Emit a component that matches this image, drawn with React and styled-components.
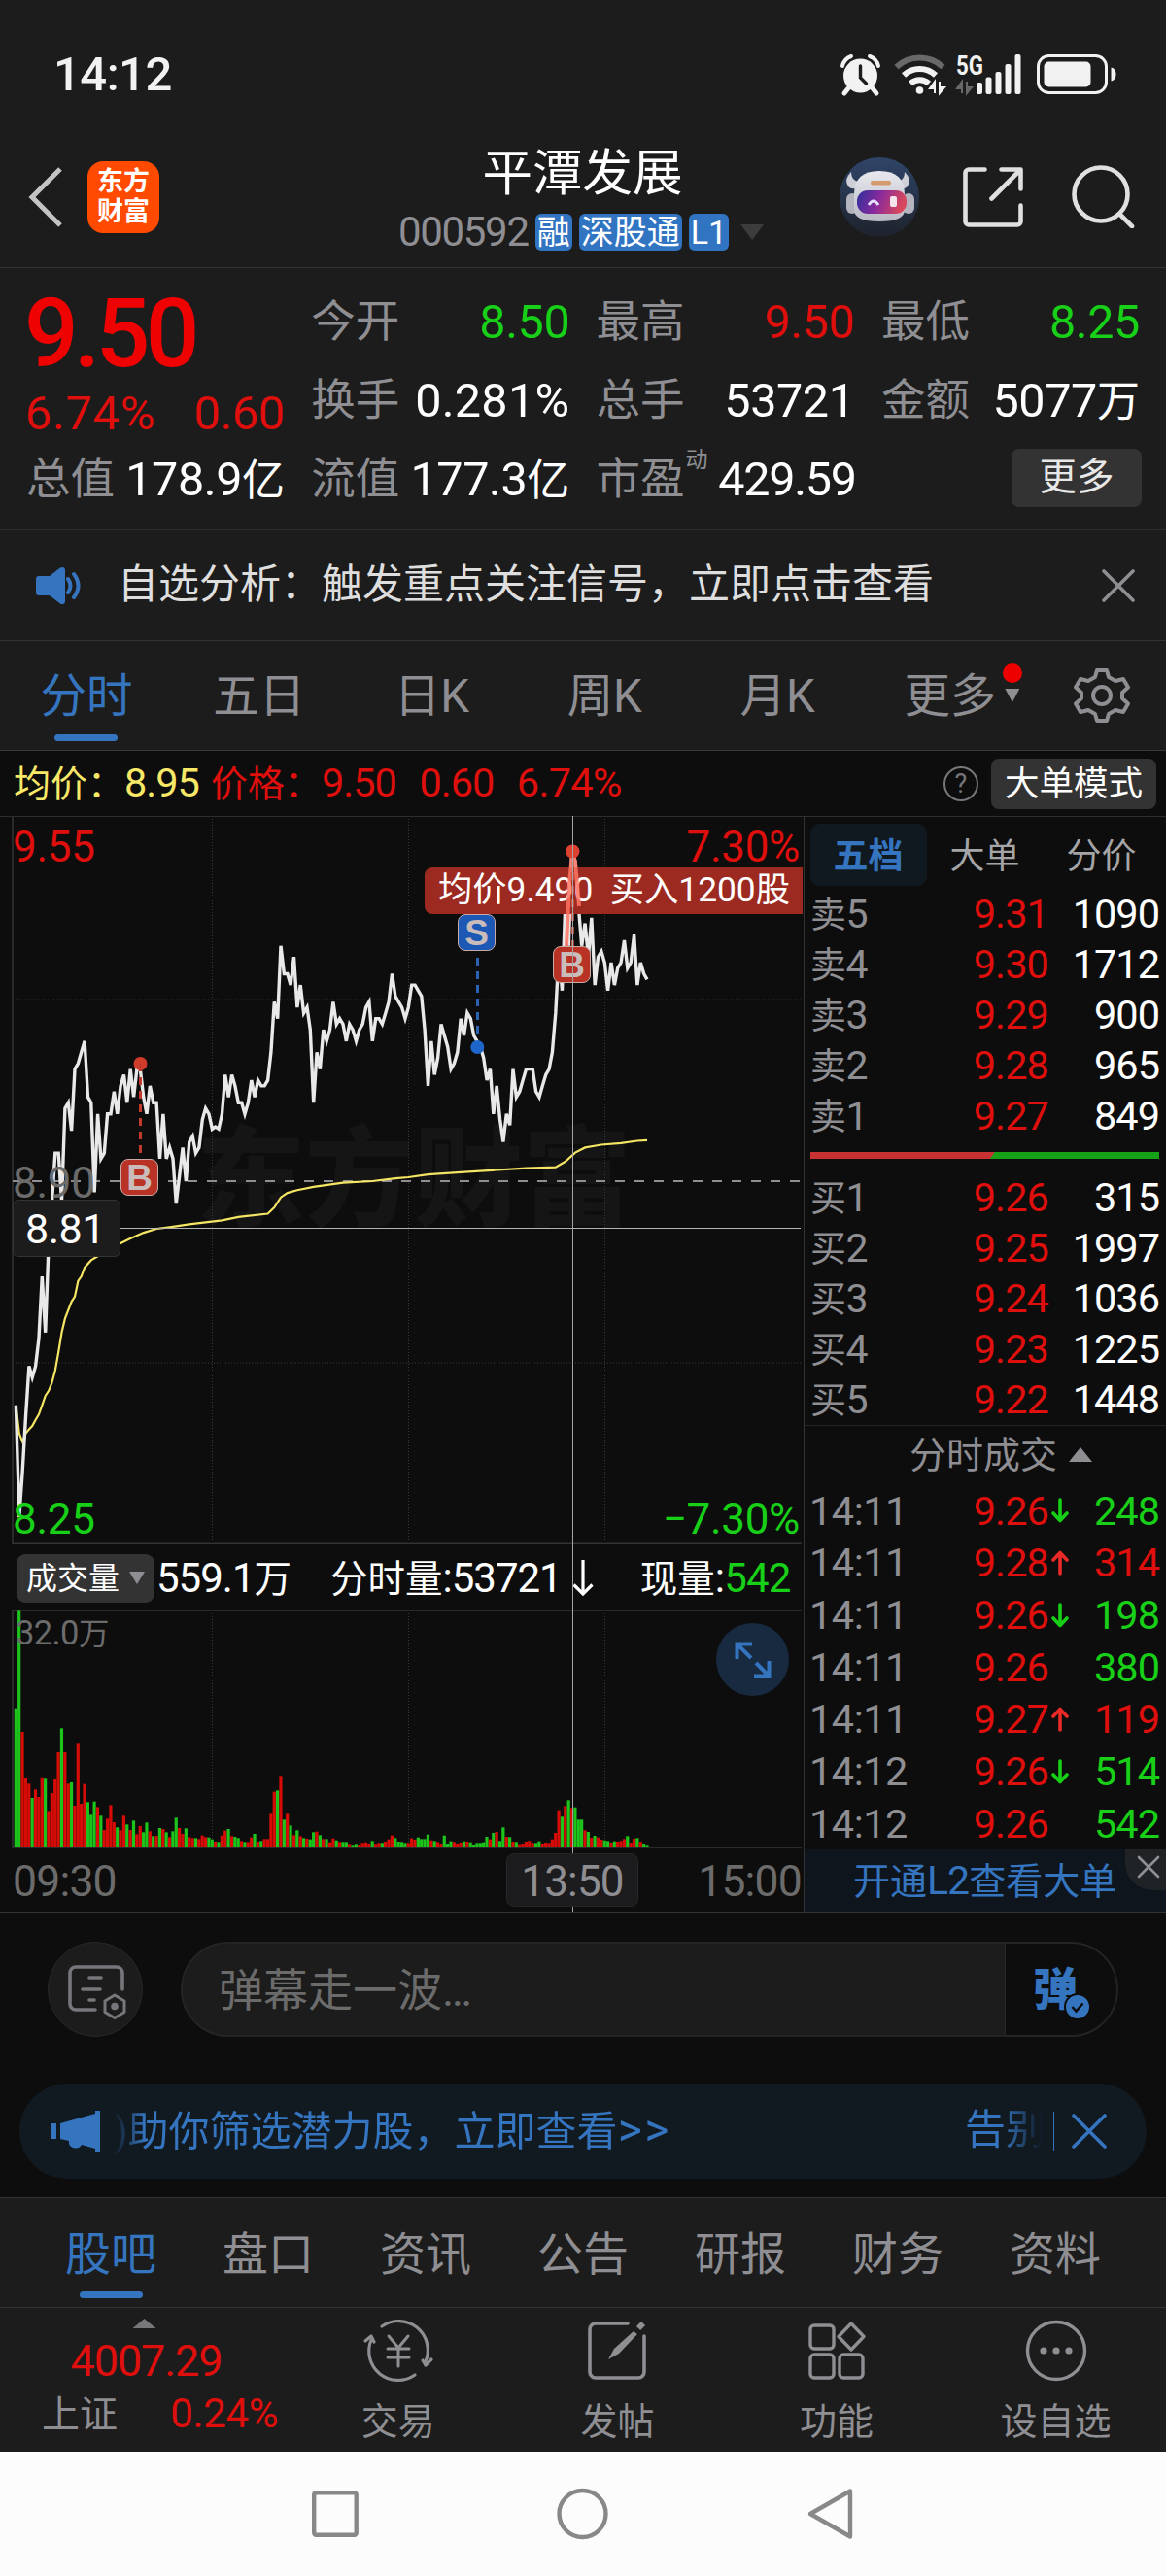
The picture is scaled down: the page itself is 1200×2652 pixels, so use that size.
import styled, { createGlobalStyle, css } from "styled-components";

const RED = "#de0f0c";
const GREEN = "#18d018";
const BLUE = "#3575c0";
const GREY = "#8e8e93";
const DIM = "#6b6b6b";

// cents relative to the previous close (8.90), one value per minute
const PRICES = [
    -40, -60, -52, -42, -33, -35, -33, -28, -17, -27, -11, -4, 5, 5, -3.5, 13, 14, 9, 20, 21,
    23, 25, 15, 14, -2, 12, 4, 5, 12, 12, 16, 12, 17, 19, 14, 20, 15, 20, 20, 15,
    12, 17, 14, 14, 4, 12, 4, 6, 4, -4, 1, 6, 0, 7, 8, 5, 6, 11, 13, 12,
    9.3, 9.7, 9.3, 12, 19, 15, 19, 17, 14, 14, 12, 14, 18, 15, 18, 17, 17, 18, 23, 32,
    29, 42, 37, 37, 35, 40, 31, 35, 30, 31, 27, 14, 23, 20, 27, 25, 27, 32, 28, 29,
    28, 25, 28, 27, 25, 27, 28, 31, 32, 25, 29, 29, 28, 30, 32, 37, 33, 32, 31, 29,
    31, 35, 35, 34, 33, 27, 17, 25, 19, 22, 28, 26, 24, 20, 21, 23, 29, 26, 30, 29,
    26, 25, 24, 22, 18, 20, 12, 17, 11, 7, 12, 10, 20, 15, 16, 18, 20, 20, 20, 16,
    15, 17, 19, 20, 23, 30, 41, 34, 50, 42, 59, 57, 49, 42, 46, 40, 47, 35, 40, 41,
    39, 34, 39, 35, 38, 39, 43, 38, 39, 44, 35, 39, 37, 36,
];

// [minute, cents]
const AVERAGE = [
    [0, -40], [1, -45], [2, -46.5], [3, -45], [4, -44.3], [5, -43.7], [6, -42.6], [7, -41.6], [8, -40],
    [9, -38.3], [10, -37.4], [11, -36], [12, -33.8], [13, -30.5], [14, -27], [15, -24.5], [17, -21.5],
    [18, -20.6], [19, -17.8], [20, -17], [21, -15.4], [23, -14.1], [25, -13.4], [27, -12.8], [32, -11.1],
    [35, -10.2], [39, -9.2], [43, -8.5], [47, -8.2], [53, -7.7], [63, -7], [68, -6.4], [77, -5.8],
    [79, -4.7], [81, -2.9], [83, -2.1], [86, -1.6], [91, -1], [100, -0.3], [109, 0], [116, 0.5],
    [120, 0.7], [126, 1.2], [136, 1.6], [147, 2], [156, 2.3], [165, 2.5], [168, 3.5], [171, 5.1],
    [174, 6], [179, 6.5], [185, 6.8], [190, 7.2], [193, 7.3],
];

// positive = rising minute, negative = falling minute
const VOLUMES = [
    -430, -731, 357, 216, 197, -153, 179, 156, 217, -215, 113, 168, 210, 294, -368, 294, 197, -201, 129, 323,
    135, 196, -140, -101, -142, 125, -98, 54, 89, 131, 78, -62, 53, 98, -71, 54, -83, 41, 66, -47,
    -77, 50, -35, 36, -60, 57, -47, 32, -50, -92, 60, 42, -59, 32, 29, -29, 26, 37, 32, -31,
    -25, 18, -17, 37, 52, -57, 35, -33, -29, 20, -17, 17, 31, -42, 18, -20, 26, 26, 104, 172,
    -176, 221, -86, 104, -68, 38, -53, 35, -29, 27, -25, -47, 49, -38, 26, -26, 16, 28, -22, 17,
    -17, -17, 11, -8, -11, 9, 14, 16, 12, -20, 11, 14, -14, 18, 25, 37, -29, -18, -17, -14,
    14, 28, 24, -31, -26, -26, -40, 22, -20, 17, 12, -37, -12, -19, 17, 12, 15, -19, 18, -16,
    -9, -14, -14, -16, -33, 25, -45, 48, -20, -62, 33, -32, 18, -17, 10, 12, 18, 20, 14, -14,
    -19, 12, 15, 14, 25, 45, 115, -95, 128, -146, 122, -124, -86, -86, 53, -48, 30, -36, 31, 24,
    -22, -20, 15, -19, 18, 20, 26, -35, 15, 27, -29, 18, -12, -8,
];

const xOf = (minute) => 16.4 + minute * 3.366;
const yOf = (cents) => 376 - cents * 5.77;
const toPoints = (list) => list.map(([m, c]) => `${xOf(m).toFixed(1)},${yOf(c).toFixed(1)}`).join(" ");

const SELLS = [
    ["卖5", "9.31", "1090"],
    ["卖4", "9.30", "1712"],
    ["卖3", "9.29", "900"],
    ["卖2", "9.28", "965"],
    ["卖1", "9.27", "849"],
];

const BUYS = [
    ["买1", "9.26", "315"],
    ["买2", "9.25", "1997"],
    ["买3", "9.24", "1036"],
    ["买4", "9.23", "1225"],
    ["买5", "9.22", "1448"],
];

const TRADES = [
    ["14:11", "9.26", "down", "248", GREEN],
    ["14:11", "9.28", "up", "314", RED],
    ["14:11", "9.26", "down", "198", GREEN],
    ["14:11", "9.26", "", "380", GREEN],
    ["14:11", "9.27", "up", "119", RED],
    ["14:12", "9.26", "down", "514", GREEN],
    ["14:12", "9.26", "", "542", GREEN],
];

const SECTIONS = ["股吧", "盘口", "资讯", "公告", "研报", "财务", "资料"];

function StatusIcons() {
    return (
        <svg width="290" height="70" viewBox="862 42 290 70" fill="#f2f2f2">
            <circle cx="885.5" cy="78" r="17.5" />
            <path d="M867 68a14 14 0 0 1 9-10M904 68a14 14 0 0 0-9-10" stroke="#f2f2f2" strokeWidth="4" fill="none" strokeLinecap="round" />
            <path d="M873 91l-4 5M898 91l4 5" stroke="#f2f2f2" strokeWidth="5" strokeLinecap="round" />
            <path d="M885.5 68v12l6 6" stroke="#1c1c1c" strokeWidth="3.4" fill="none" strokeLinecap="round" />
            <g fill="none" strokeLinecap="butt">
                <path d="M922.5 69a35 35 0 0 1 48 0" stroke="#686868" strokeWidth="6" />
                <path d="M930 77.5a24 24 0 0 1 33 0" stroke="#f2f2f2" strokeWidth="6" />
                <path d="M937 86a14 14 0 0 1 19 0" stroke="#f2f2f2" strokeWidth="6" />
            </g>
            <circle cx="946.5" cy="93" r="3.8" />
            <path d="M962 96V84l-5 7h5M967 84v12l5-6h-5" stroke="#f2f2f2" strokeWidth="2" />
            <path d="M990 96V84l-5 7h5M995 84v12l5-6h-5" stroke="#686868" strokeWidth="2" fill="#686868" />
            <text x="984" y="76.5" fontSize="27" fontWeight="700" fontFamily="Roboto, sans-serif" textLength="28" lengthAdjust="spacingAndGlyphs">5G</text>
            <rect x="1005" y="85" width="6" height="12" rx="2" />
            <rect x="1014.5" y="79.5" width="6" height="17.5" rx="2" />
            <rect x="1024.5" y="74" width="6" height="23" rx="2" />
            <rect x="1034.5" y="66" width="6" height="31" rx="2" />
            <rect x="1044.5" y="56" width="6" height="41" rx="2" />
            <rect x="1068.5" y="57.5" width="70" height="38" rx="11" fill="none" stroke="#f2f2f2" strokeWidth="3" />
            <rect x="1074.5" y="63.5" width="48" height="26" rx="5" />
            <path d="M1143.5 69.5q5 1 5 7t-5 7z" />
        </svg>
    );
}

function RobotIcon() {
    return (
        <svg width="82" height="82" viewBox="0 0 82 82">
            <defs>
                <linearGradient id="sky" x1="0" y1="0" x2="0" y2="1">
                    <stop offset="0" stopColor="#2f4569" />
                    <stop offset="1" stopColor="#1e222b" />
                </linearGradient>
                <linearGradient id="visor" x1="0" y1="0" x2="1" y2="0.2">
                    <stop offset="0" stopColor="#2d2f9c" />
                    <stop offset="0.5" stopColor="#8a2a9c" />
                    <stop offset="1" stopColor="#d8485c" />
                </linearGradient>
                <linearGradient id="shell" x1="0" y1="0" x2="0" y2="1">
                    <stop offset="0" stopColor="#e8e8ee" />
                    <stop offset="1" stopColor="#b9b9c4" />
                </linearGradient>
            </defs>
            <circle cx="41" cy="41" r="41" fill="url(#sky)" />
            <path d="M12 15q-8 8-3 15 4 4 9 1l2-6q-8-1-8-10zM67 15q8 8 3 15-4 4-9 1l-2-6q8-1 8-10z" fill="#cfcfd8" />
            <rect x="7" y="37" width="12" height="21" rx="6" fill="#b4b4bf" />
            <rect x="65" y="37" width="12" height="21" rx="6" fill="#b4b4bf" />
            <path d="M15 38q0-24 26-24t26 24v16q0 12-26 12T15 54z" fill="url(#shell)" />
            <rect x="32" y="24" width="21" height="4.5" rx="2" fill="#d49a6c" />
            <rect x="18" y="34" width="51" height="24" rx="11" fill="url(#visor)" />
            <path d="M30 49q5-8 10 0" fill="none" stroke="#e6e0ff" strokeWidth="3" />
            <rect x="52" y="40" width="7" height="11" rx="2" fill="#f3e4ee" />
        </svg>
    );
}

function Cross({ size, width = 3, color = GREY }) {
    return (
        <svg width={size} height={size} viewBox={`0 0 ${size} ${size}`}>
            <path d={`M2 2L${size - 2} ${size - 2}M${size - 2} 2L2 ${size - 2}`} stroke={color} strokeWidth={width} strokeLinecap="round" />
        </svg>
    );
}

function GearIcon() {
    return (
        <svg width="58" height="58" viewBox="0 0 58 58" fill="none" stroke={GREY} strokeWidth="4" strokeLinejoin="round">
            <path d="M24 3h10l2 7 7 4 8-2 5 8.5-6 5.5v6l6 5.5-5 8.5-8-2-7 4-2 7H24l-2-7-7-4-8 2-5-8.5L8 32v-6l-6-5.5L7 12l8 2 7-4z" />
            <circle cx="29" cy="29" r="9" />
        </svg>
    );
}

function TradeArrow({ dir }) {
    if (!dir) return null;
    return (
        <svg width="18" height="26" viewBox="0 0 18 26" fill="none" stroke={dir === "up" ? "#ea2a26" : "#16d016"} strokeWidth="3.6" strokeLinecap="round" strokeLinejoin="round">
            <path d={dir === "up" ? "M9 24V3M2 10l7-7.5 7 7.5" : "M9 2v21M2 16l7 7.5 7-7.5"} />
        </svg>
    );
}

function PriceChart() {
    return (
        <svg width="827" height="750" viewBox="0 0 827 750" fill="none">
            <g stroke="#3a3a3a" strokeDasharray="1 2" strokeWidth="1">
                <path d="M218.5 0V750M420.5 0V750M622.5 0V750" />
                <path d="M13 189H824M13 563H824" />
            </g>
            <path d="M13 0V750" stroke="#2a2a2a" strokeWidth="2" />
            <path d="M0 0.5H827" stroke="#2e2e2e" />
            <path d="M13 749.5H825" stroke="#333" strokeWidth="2" />
            <path d="M13 376H824" stroke="#8e8e93" strokeWidth="2" strokeDasharray="10 10" />
            <polyline points={toPoints(AVERAGE)} stroke="#f5e564" strokeWidth="2.2" />
            <polyline points={toPoints(PRICES.map((c, m) => [m, c]))} stroke="#e9e9e9" strokeWidth="3.4" />
            <g fill="#d03c2c">
                <circle cx="144.5" cy="255" r="7" />
                <circle cx="589.3" cy="36.5" r="7" />
            </g>
            <circle cx="491.3" cy="238" r="7" fill="#1f66cc" />
            <path d="M144.5 255V350" stroke="#c23a2b" strokeWidth="3" strokeDasharray="8 6" />
            <path d="M491.5 146V226" stroke="#2a62b4" strokeWidth="3" strokeDasharray="8 6" />
        </svg>
    );
}

function VolumeChart() {
    return (
        <svg width="827" height="245" viewBox="0 0 827 245">
            <path d="M218.5 0V245M420.5 0V245M622.5 0V245" stroke="#3a3a3a" strokeDasharray="1 2" />
            <path d="M13 0V245M13 244.5H825" stroke="#2a2a2a" strokeWidth="2" />
            <path d="M13 0.5H825" stroke="#2a2a2a" />
            {VOLUMES.map((v, m) => {
                const h = Math.abs(v) / 3;
                return <rect key={m} x={xOf(m) - 1.68} y={244 - h} width="3.2" height={h} fill={v > 0 ? "#d80c06" : "#1cc41c"} />;
            })}
        </svg>
    );
}

function Badge({ x, y, letter }) {
    return <Mark $x={x} $y={y} $sell={letter === "S"}>{letter}</Mark>;
}

function BookRows({ rows }) {
    return (
        <Book>
            {rows.map(([name, price, volume]) => (
                <BookRow key={name}>
                    <BookName>{name[0]}<Num $size={41}>{name[1]}</Num></BookName>
                    <BookPrice>{price}</BookPrice>
                    <BookVolume>{volume}</BookVolume>
                </BookRow>
            ))}
        </Book>
    );
}

export default function App() {
    return (
        <Phone>
            <GlobalStyle />
            <StatusBar>
                <Clock>14:12</Clock>
                <StatusIcons />
            </StatusBar>

            <Header>
                <HeaderSide>
                    <svg width="36" height="62" viewBox="0 0 36 62" fill="none" stroke="#c4c4c4" strokeWidth="5">
                        <path d="M33 2L4 31l29 29" />
                    </svg>
                    <Brand><span>东方</span><span>财富</span></Brand>
                </HeaderSide>
                <TitleBlock>
                    <Title>平潭发展</Title>
                    <CodeLine>
                        <Num $size={42} $ls={-1.3}>000592</Num>
                        <Chip>融</Chip>
                        <Chip>深股通</Chip>
                        <Chip>L1</Chip>
                        <Triangle $w={24} $h={16} $color="#3c3c3c" />
                    </CodeLine>
                </TitleBlock>
                <HeaderActions>
                    <RobotIcon />
                    <svg width="62" height="62" viewBox="0 0 62 62" fill="none" stroke="#e0e0e0" strokeWidth="4.6" strokeLinecap="round" strokeLinejoin="round">
                        <path d="M22.5 2.5H6a3.5 3.5 0 0 0-3.5 3.5v50A3.5 3.5 0 0 0 6 59.5h50a3.5 3.5 0 0 0 3.5-3.5V39.5" />
                        <path d="M39.5 2.5h20v20M59 3L29.5 32.5" />
                    </svg>
                    <svg width="66" height="66" viewBox="0 0 66 66" fill="none" stroke="#e0e0e0" strokeWidth="4.6" strokeLinecap="round">
                        <circle cx="31" cy="31" r="27.5" />
                        <path d="M50.5 51.5L63 64" />
                    </svg>
                </HeaderActions>
            </Header>

            <Quote>
                <Price>
                    <BigPrice>9.50</BigPrice>
                    <Change><span>6.74%</span><span>0.60</span></Change>
                </Price>
                <Cell><Label>今开</Label><Value $color={GREEN}>8.50</Value></Cell>
                <Cell><Label>最高</Label><Value $color={RED}>9.50</Value></Cell>
                <Cell><Label>最低</Label><Value $color={GREEN}>8.25</Value></Cell>
                <Cell><Label>换手</Label><Value $wide>0.281%</Value></Cell>
                <Cell><Label>总手</Label><Value>53721</Value></Cell>
                <Cell><Label>金额</Label><Value>5077<Unit>万</Unit></Value></Cell>
                <Cell><Label>总值</Label><Value>178.9<Unit>亿</Unit></Value></Cell>
                <Cell><Label>流值</Label><Value>177.3<Unit>亿</Unit></Value></Cell>
                <Cell><Label>市盈<Sup>动</Sup></Label><PeValue>429.59</PeValue></Cell>
                <MoreCell><MoreButton>更多</MoreButton></MoreCell>
            </Quote>

            <Notice>
                <svg width="48" height="40" viewBox="0 0 48 40" fill={BLUE}>
                    <path d="M3 10h11L25 1.5q5-2 5 3v31q0 5-5 3L14 30H3q-3 0-3-3V13q0-3 3-3z" />
                    <path d="M33 13q5 7 0 14M39 8q9 12 0 24" fill="none" stroke={BLUE} strokeWidth="4" strokeLinecap="round" />
                </svg>
                <NoticeText>自选分析：触发重点关注信号，立即点击查看</NoticeText>
                <Cross size={34} width={3.6} />
            </Notice>

            <Periods>
                <Period $active>分时</Period>
                <Period>五日</Period>
                <Period>日K</Period>
                <Period>周K</Period>
                <Period>月K</Period>
                <Period>
                    <MorePeriods>更多<RedDot /><Caret><Triangle $w={15} $h={14} $color={GREY} /></Caret></MorePeriods>
                </Period>
                <GearBox><GearIcon /></GearBox>
            </Periods>

            <InfoBar>
                <InfoText $color="#f8e868">均价：<Num $size={41.5} $ls={-1}>8.95</Num></InfoText>
                <InfoText $color={RED} $left={12}>
                    价格：<Num $size={41.5} $ls={-1}>9.50</Num><Num $size={41.5} $ls={-1}>0.60</Num><Num $size={41.5} $ls={-0.7}>6.74%</Num>
                </InfoText>
                <Help>?</Help>
                <ModeButton>大单模式</ModeButton>
            </InfoBar>

            <Market>
                <Charts>
                    <Plot>
                        <Watermark>东方财富</Watermark>
                        <PriceChart />
                        <Corner $x={13} $y={10} $color={RED}>9.55</Corner>
                        <Corner $right={4} $y={10} $color={RED}>7.30%</Corner>
                        <Corner $x={13} $y={702} $color={GREEN}>8.25</Corner>
                        <Corner $right={4} $y={702} $color={GREEN}>−7.30%</Corner>
                        <Corner $x={13} $y={356} $color={DIM}>8.90</Corner>
                        <CrossH />
                        <Badge x={124} y={353} letter="B" />
                        <Badge x={471} y={101} letter="S" />
                        <Badge x={569} y={134} letter="B" />
                        <Tip><span>均价9.490</span><span>买入1200股</span></Tip>
                        <PriceTag>8.81</PriceTag>
                        <Spike width="60" height="120" viewBox="560 30 60 120" fill="none">
                            <path d="M583 134L586 70 589.3 36 592 48 596 93" stroke="#ff7464" strokeWidth="4" />
                            <path d="M589.3 44V134" stroke="#e0604f" strokeWidth="3" strokeDasharray="8 6" />
                            <circle cx="589.3" cy="36.5" r="7" fill="#e04433" />
                        </Spike>
                    </Plot>
                    <VolumeHead>
                        <VolumeSelect>成交量<Triangle $w={16} $h={13} $color={GREY} /></VolumeSelect>
                        <VolumeItem $left={2}><Num $size={42} $ls={-1}>559.1</Num>万</VolumeItem>
                        <VolumeItem $left={40}>分时量<Num $size={42} $ls={-1}>:53721</Num></VolumeItem>
                        <DownArrow width="22" height="38" viewBox="0 0 22 38" fill="none" stroke="#fff" strokeWidth="3.2">
                            <path d="M11 0v34M1.5 25.5L11 35l9.5-9.5" />
                        </DownArrow>
                        <VolumeItem $left={48}>现量<Num $size={42} $ls={-0.8}>:</Num><Num $size={42} $ls={-0.8} $color={GREEN}>542</Num></VolumeItem>
                    </VolumeHead>
                    <VolumePlot>
                        <VolumeChart />
                        <VolumeMax>32.0<small>万</small></VolumeMax>
                        <Expand>
                            <svg width="38" height="38" viewBox="0 0 38 38" fill="none" stroke={BLUE} strokeWidth="4">
                                <path d="M2.5 18V2.5H18M3 3l14 14M20 35.5h15.5V20M35 35L22 22" />
                            </svg>
                        </Expand>
                    </VolumePlot>
                    <TimeAxis><span>09:30</span><span>15:00</span></TimeAxis>
                    <CrossV />
                    <TimeTag>13:50</TimeTag>
                </Charts>

                <Side>
                    <SideTabs>
                        <SideTab $active>五档</SideTab>
                        <SideTab>大单</SideTab>
                        <SideTab>分价</SideTab>
                    </SideTabs>
                    <BookRows rows={SELLS} />
                    <Ratio />
                    <BookRows rows={BUYS} />
                    <TradesTitle>分时成交<Triangle $up $w={24} $h={15} $color={GREY} /></TradesTitle>
                    <Trades>
                        {TRADES.map(([time, price, dir, volume, color], i) => (
                            <Trade key={i}>
                                <TradeTime>{time}</TradeTime>
                                <TradePrice>{price}</TradePrice>
                                <TradeDir><TradeArrow dir={dir} /></TradeDir>
                                <TradeVolume $color={color}>{volume}</TradeVolume>
                            </Trade>
                        ))}
                    </Trades>
                    <Promo>
                        开通<Num $size={41} $ls={-1}>L2</Num>查看大单
                        <PromoClose><Cross size={24} width={2.6} /></PromoClose>
                    </Promo>
                </Side>
            </Market>

            <Danmu>
                <DanmuSettings>
                    <svg width="60" height="56" viewBox="0 0 60 56" fill="none" stroke="#77777b" strokeWidth="3.6" strokeLinecap="round">
                        <path d="M28 46H8a6 6 0 0 1-6-6V8a6 6 0 0 1 6-6h42a6 6 0 0 1 6 6v17" />
                        <path d="M22 13h12M15 25h18M22 36h5" />
                        <path d="M48 31l10 6v11.5l-10 6-10-6V37z" strokeLinejoin="round" strokeWidth="3" />
                        <circle cx="48" cy="42.5" r="2" fill="#77777b" />
                    </svg>
                </DanmuSettings>
                <DanmuInput>
                    <DanmuHint>弹幕走一波…</DanmuHint>
                    <DanmuToggle>
                        弹
                        <DanmuCheck width="28" height="28" viewBox="0 0 28 28">
                            <circle cx="14" cy="14" r="13" fill={BLUE} stroke="#0d0d0d" strokeWidth="2" />
                            <path d="M8.5 14l4 4.5 7-8" fill="none" stroke="#0d0d0d" strokeWidth="2.6" />
                        </DanmuCheck>
                    </DanmuToggle>
                </DanmuInput>
            </Danmu>

            <Banner>
                <svg width="50" height="43" viewBox="0 0 50 43" fill={BLUE}>
                    <path d="M0 13h5v16H0zM9 13L45 3V0h5v43h-5v-4l-14-4q-3 5-9 3-5-2-4-7l-9-2z" />
                </svg>
                <Marquee>
                    <span>)助你筛选潜力股，立即查看<Num $size={48} $ls={2.5}>&gt;&gt;</Num></span>
                    <span>告别</span>
                </Marquee>
                <BannerRule />
                <Cross size={36} width={3.6} color={BLUE} />
            </Banner>

            <Sections>
                {SECTIONS.map((name, i) => <Section key={name} $active={i === 0}>{name}</Section>)}
            </Sections>

            <BottomBar>
                <IndexBox>
                    <Triangle $up $w={24} $h={10} $color="#77777b" />
                    <IndexValue>4007.29</IndexValue>
                    <IndexLine><span>上证</span><Num $size={42} $ls={-0.4} $color={RED}>0.24%</Num></IndexLine>
                </IndexBox>
                <Action>
                    <svg width="74" height="66" viewBox="-37 -33 74 66" fill="none" stroke={GREY} strokeWidth="3.2" strokeLinecap="round" strokeLinejoin="round">
                        <path d="M-17 -25A30 30 0 0 1 28 11M17 25A30 30 0 0 1 -28 -11" />
                        <path d="M-34 -10l6 -5 3 6M34 9l-6 6-3-5" />
                        <path d="M-10 -15L0 -3 10 -15M0 -3V16M-11 -2H11M-11 7H11" strokeWidth="3" />
                    </svg>
                    交易
                </Action>
                <Action>
                    <svg width="64" height="66" viewBox="-32 -33 64 66" fill="none" stroke={GREY} strokeWidth="3.6" strokeLinecap="round">
                        <path d="M11 -28H-22a6 6 0 0 0-6 6V22a6 6 0 0 0 6 6H22a6 6 0 0 0 6-6V-15" />
                        <path d="M-9 9L-3 -2 17 -20 21 -17 2 3z" fill={GREY} stroke="none" />
                        <path d="M22 -23L27 -28" strokeWidth="6" strokeLinecap="butt" />
                    </svg>
                    发帖
                </Action>
                <Action>
                    <svg width="64" height="66" viewBox="-32 -33 64 66" fill="none" stroke={GREY} strokeWidth="3.4" strokeLinejoin="round">
                        <rect x="-27" y="-26" width="24" height="24" rx="4" />
                        <rect x="-27" y="4" width="24" height="24" rx="4" />
                        <rect x="3" y="4" width="24" height="24" rx="4" />
                        <path d="M15 -28L28 -14.5 15 -1 2 -14.5z" />
                    </svg>
                    功能
                </Action>
                <Action>
                    <svg width="64" height="66" viewBox="-32 -33 64 66" fill="none" stroke={GREY} strokeWidth="3.4">
                        <circle cx="0" cy="0" r="29.5" />
                        <g fill={GREY} stroke="none">
                            <circle cx="-13" cy="0" r="3.6" />
                            <circle cx="0" cy="0" r="3.6" />
                            <circle cx="13" cy="0" r="3.6" />
                        </g>
                    </svg>
                    设自选
                </Action>
            </BottomBar>

            <SystemNav>
                <svg width="560" height="56" viewBox="320 2560 560 56" fill="none" stroke="#888" strokeWidth="4.4" strokeLinejoin="round">
                    <rect x="323.2" y="2566.2" width="43.5" height="43.5" rx="2" />
                    <circle cx="599.5" cy="2588" r="24" />
                    <path d="M875 2564.5v47L834 2588z" />
                </svg>
            </SystemNav>
        </Phone>
    );
}

const GlobalStyle = createGlobalStyle`
    body {
        margin: 0;
        background: #0d0d0d;
    }
    * {
        box-sizing: border-box;
    }
    svg {
        display: block;
        flex: none;
    }
`;

const Phone = styled.div`
    width: 1200px;
    height: 2652px;
    overflow: hidden;
    background: #0d0d0d;
    color: #fff;
    font-family: Roboto, "Noto Sans CJK SC", sans-serif;
    line-height: 1;
    white-space: nowrap;
`;

const Num = styled.span`
    font-size: ${(p) => p.$size}px;
    letter-spacing: ${(p) => p.$ls || 0}px;
    color: ${(p) => p.$color || "inherit"};
`;

const Triangle = styled.i`
    flex: none;
    width: ${(p) => p.$w}px;
    height: ${(p) => p.$h}px;
    background: ${(p) => p.$color};
    clip-path: ${(p) => (p.$up ? "polygon(50% 0, 100% 100%, 0 100%)" : "polygon(0 0, 100% 0, 50% 100%)")};
`;

const StatusBar = styled.div`
    height: 130px;
    padding: 23px 48px 0 55px;
    display: flex;
    align-items: center;
    justify-content: space-between;
    background: #1c1c1c;
`;

const Clock = styled.div`
    font-size: 49px;
    font-weight: 500;
    letter-spacing: -0.5px;
    color: #f2f2f2;
`;

const Header = styled.div`
    height: 146px;
    display: flex;
    background: #1c1c1c;
    border-bottom: 1px solid #333;
`;

const HeaderSide = styled.div`
    width: 400px;
    padding: 36px 0 0 29px;
    display: flex;
    align-items: flex-start;
    gap: 25px;

    > svg {
        margin-top: 6px;
    }
`;

const Brand = styled.div`
    width: 74px;
    height: 74px;
    border-radius: 16px;
    background: #ff4a00;
    display: flex;
    flex-direction: column;
    align-items: center;
    justify-content: center;
    font-size: 27px;
    font-weight: 700;
    line-height: 31px;
`;

const TitleBlock = styled.div`
    width: 400px;
    display: flex;
    flex-direction: column;
    align-items: center;
    padding-top: 21px;
`;

const Title = styled.div`
    margin-right: 1px;
    font-size: 51.5px;
    line-height: 56px;
`;

const CodeLine = styled.div`
    display: flex;
    align-items: center;
    margin: 12px 4px 0 0;
    height: 40px;
    gap: 7px;
    color: ${GREY};

    > i {
        margin-left: 5px;
    }
`;

const Chip = styled.span`
    height: 38px;
    padding: 0 2px;
    border-radius: 6px;
    background: #3174c2;
    color: #fff;
    font-size: 34px;
    line-height: 38px;
`;

const HeaderActions = styled.div`
    width: 400px;
    height: 146px;
    display: flex;
    align-items: flex-start;
    padding: 32px 0 0 64px;
    gap: 45px;

    > svg + svg {
        margin-top: 10px;
    }

    > svg:nth-child(3) {
        margin-left: 4px;
        margin-top: 7px;
    }
`;

const Quote = styled.div`
    height: 270px;
    padding: 15px 28px 0 27px;
    display: grid;
    grid-template-columns: repeat(4, 265px);
    grid-template-rows: repeat(3, 81.3px);
    column-gap: 28.3px;
    background: #1c1c1c;
    border-bottom: 1px solid #2c2c2c;
`;

const Price = styled.div`
    grid-row: span 2;
    display: flex;
    flex-direction: column;
`;

const BigPrice = styled.div`
    margin: 3px 0 0 -2px;
    font-size: 98px;
    font-weight: 500;
    line-height: 100px;
    letter-spacing: -4.6px;
    color: #ee0202;
`;

const Change = styled.div`
    display: flex;
    justify-content: space-between;
    margin: 7px -1px 0 -1px;
    font-size: 49px;
    line-height: 50px;
    color: ${RED};

    span:first-child {
        letter-spacing: 0.6px;
    }

    span:last-child {
        letter-spacing: -0.6px;
    }
`;

const Cell = styled.div`
    display: flex;
    align-items: center;
    justify-content: space-between;
`;

const Label = styled.span`
    position: relative;
    font-size: 45.5px;
    color: ${GREY};
`;

const Value = styled.span`
    margin: 1px -1px 0 0;
    font-size: 48.5px;
    letter-spacing: ${(p) => (p.$wide ? 0.3 : -0.4)}px;
    color: ${(p) => p.$color || "#fff"};
`;

const PeValue = styled(Value)`
    letter-spacing: -1.3px;
    margin-right: -2px;
`;

const Unit = styled.span`
    font-size: 44px;
    letter-spacing: 0;
`;

const Sup = styled.sup`
    position: absolute;
    left: 92px;
    top: -9px;
    font-size: 23px;
    line-height: 24px;
`;

const MoreCell = styled.div`
    display: flex;
    align-items: center;
    justify-content: flex-end;
`;

const MoreButton = styled.div`
    width: 134px;
    height: 60px;
    margin: -4px -3px 0 0;
    border-radius: 8px;
    background: #333;
    color: #e8e8e8;
    font-size: 38.5px;
    line-height: 58px;
    text-align: center;
`;

const Notice = styled.div`
    height: 114px;
    padding: 0 32px 0 37px;
    display: flex;
    align-items: center;
    background: #1c1c1c;
    border-bottom: 1px solid #333;
`;

const NoticeText = styled.div`
    flex: 1;
    margin: -2px 0 0 36px;
    font-size: 42px;
    color: #dedede;
`;

const Periods = styled.div`
    height: 113px;
    display: flex;
    background: #1c1c1c;
    border-bottom: 1px solid #383838;
`;

const underline = css`
    color: ${BLUE};

    &::after {
        content: "";
        position: absolute;
        left: calc(50% - 32.5px);
        bottom: 9px;
        width: 65px;
        height: 7px;
        border-radius: 4px;
        background: ${BLUE};
    }
`;

const Period = styled.div`
    position: relative;
    width: 177.8px;
    font-size: 47.5px;
    line-height: 115px;
    text-align: center;
    color: ${GREY};
    ${(p) => p.$active && underline}
`;

const MorePeriods = styled.span`
    position: relative;
`;

const RedDot = styled.i`
    position: absolute;
    right: -27px;
    top: -6px;
    width: 20px;
    height: 20px;
    border-radius: 50%;
    background: #ee0000;
`;

const Caret = styled.i`
    position: absolute;
    right: -24px;
    top: 20px;
    display: flex;
`;

const GearBox = styled.div`
    flex: 1;
    display: flex;
    align-items: center;
    justify-content: center;
    padding-left: 2px;
`;

const InfoBar = styled.div`
    height: 67px;
    padding: 0 10px 0 14px;
    display: flex;
    align-items: center;
`;

const InfoText = styled.div`
    display: flex;
    align-items: baseline;
    margin: -1px 0 0 ${(p) => p.$left || 0}px;
    font-size: 38px;
    color: ${(p) => p.$color};

    ${Num} + ${Num} {
        margin-left: 23.5px;
    }
`;

const Help = styled.div`
    width: 36px;
    height: 36px;
    margin: 0 13px 0 auto;
    border: 2.5px solid #77777b;
    border-radius: 50%;
    color: #77777b;
    font-size: 27px;
    line-height: 32px;
    text-align: center;
`;

const ModeButton = styled.div`
    width: 170px;
    height: 52px;
    border-radius: 8px;
    background: #333;
    font-size: 35.5px;
    line-height: 52px;
    text-align: center;
`;

const Market = styled.div`
    height: 1129px;
    display: flex;
    border-bottom: 1px solid #333;
`;

const Charts = styled.div`
    position: relative;
    width: 827px;
`;

const Plot = styled.div`
    position: relative;
    height: 750px;

    > svg {
        position: relative;
    }
`;

const Watermark = styled.div`
    position: absolute;
    left: 202px;
    top: 320px;
    font-size: 112px;
    font-weight: 900;
    color: #151515;
`;

const Corner = styled.div`
    position: absolute;
    top: ${(p) => p.$y}px;
    ${(p) => (p.$right ? `right: ${p.$right}px` : `left: ${p.$x}px`)};
    font-size: 44px;
    letter-spacing: -0.3px;
    color: ${(p) => p.$color};
`;

const CrossH = styled.div`
    position: absolute;
    left: 13px;
    top: 424px;
    width: 811px;
    height: 1px;
    background: #b5b5b5;
`;

const CrossV = styled.div`
    position: absolute;
    left: 589px;
    top: 0;
    width: 1px;
    height: 1128px;
    background: #a5a5a5;
`;

const Mark = styled.div`
    position: absolute;
    left: ${(p) => p.$x}px;
    top: ${(p) => p.$y}px;
    width: 39px;
    height: 38px;
    border: 1.5px solid #c9aaa6;
    border-radius: 8px;
    background: ${(p) => (p.$sell ? "#1c58b4" : "#b83325")};
    color: #cbbcbc;
    font: 700 37px/37px "Liberation Sans", sans-serif;
    text-align: center;
`;

const Tip = styled.div`
    position: absolute;
    left: 437px;
    top: 53px;
    width: 389px;
    height: 48px;
    padding: 0 13px 0 14px;
    border-radius: 8px 0 0 8px;
    background: #9c2a20;
    display: flex;
    justify-content: space-between;
    font-size: 35.3px;
    line-height: 47px;
`;

const Spike = styled.svg`
    && {
        position: absolute;
        left: 560px;
        top: 30px;
        opacity: 0.85;
    }
`;

const PriceTag = styled.div`
    position: absolute;
    left: 13px;
    top: 395px;
    width: 111px;
    height: 59px;
    border: 1px solid #333;
    border-radius: 6px;
    background: #1c1c1c;
    padding: 8px 0 0 12px;
    font-size: 43px;
    line-height: 43px;
    letter-spacing: -0.5px;
`;

const VolumeHead = styled.div`
    height: 68px;
    padding: 1px 0 0 17px;
    display: flex;
    align-items: center;
`;

const VolumeSelect = styled.div`
    width: 142px;
    height: 50px;
    padding-left: 10px;
    border-radius: 9px;
    background: #333;
    display: flex;
    align-items: center;
    gap: 10px;
    font-size: 32px;
`;

const VolumeItem = styled.div`
    margin-left: ${(p) => p.$left}px;
    font-size: 38.5px;
`;

const DownArrow = styled.svg`
    margin-left: 11px;
`;

const VolumePlot = styled.div`
    position: relative;
    height: 245px;
`;

const VolumeMax = styled.div`
    position: absolute;
    left: 16px;
    top: 6px;
    font-size: 34.5px;
    letter-spacing: -0.6px;
    color: ${DIM};

    small {
        font-size: 31.5px;
    }
`;

const Expand = styled.div`
    position: absolute;
    left: 737px;
    top: 13px;
    width: 75px;
    height: 75px;
    border-radius: 50%;
    background: #182a40;
    display: flex;
    align-items: center;
    justify-content: center;
`;

const TimeAxis = styled.div`
    height: 65px;
    padding: 3px 2px 0 13px;
    display: flex;
    justify-content: space-between;
    align-items: center;
    font-size: 44.5px;
    letter-spacing: -0.8px;
    color: ${DIM};
`;

const TimeTag = styled.div`
    position: absolute;
    left: 521px;
    top: 1068px;
    width: 136px;
    height: 55px;
    border: 1px solid #262626;
    border-radius: 8px;
    background: #1c1c1e;
    color: ${GREY};
    font-size: 44px;
    line-height: 56px;
    letter-spacing: -0.8px;
    text-align: center;
`;

const Side = styled.div`
    width: 373px;
    border-left: 1px solid #333;
    border-top: 1px solid #2e2e2e;
`;

const SideTabs = styled.div`
    height: 74px;
    padding: 7px 0 0 6px;
    display: flex;
`;

const SideTab = styled.div`
    width: 120px;
    height: 64px;
    padding-right: 1px;
    border-radius: 10px;
    font-size: 36px;
    line-height: 68px;
    text-align: center;
    color: #a5a5a8;
    ${(p) => p.$active && css`
        background: #111920;
        color: ${BLUE};
        font-weight: 700;
    `}
`;

const Book = styled.div`
    display: flex;
    flex-direction: column;
`;

const BookRow = styled.div`
    height: 52px;
    padding: 0 7px 0 6px;
    display: flex;
    align-items: center;
    font-size: 41.5px;
    letter-spacing: -1px;
`;

const BookName = styled.span`
    width: 120px;
    font-size: 37px;
    letter-spacing: -0.5px;
    color: ${GREY};
`;

const BookPrice = styled.span`
    flex: 1;
    text-align: right;
    letter-spacing: -0.9px;
    color: ${RED};
`;

const BookVolume = styled.span`
    width: 114px;
    text-align: right;
`;

const Ratio = styled.div`
    height: 7px;
    margin: 11px 7px 14px 6px;
    background: linear-gradient(125deg, #c83232 52%, #17a317 52.3%);
`;

const TradesTitle = styled.div`
    height: 60px;
    padding-left: 108px;
    display: flex;
    align-items: center;
    gap: 12px;
    border-top: 1px solid #242424;
    font-size: 38px;
    color: ${GREY};
`;

const Trades = styled.div`
    display: grid;
    grid-auto-rows: 53.7px;
    padding-top: 1px;
`;

const Trade = styled.div`
    padding: 1px 7px 0 5px;
    display: flex;
    align-items: center;
    font-size: 41.5px;
    letter-spacing: -1px;
`;

const TradeTime = styled.span`
    width: 120px;
    letter-spacing: -0.5px;
    color: ${GREY};
`;

const TradePrice = styled.span`
    flex: 1;
    text-align: right;
    letter-spacing: -0.9px;
    color: ${RED};
`;

const TradeDir = styled.span`
    width: 24px;
    padding-left: 3px;
`;

const TradeVolume = styled.span`
    width: 90px;
    text-align: right;
    color: ${(p) => p.$color};
`;

const Promo = styled.div`
    position: relative;
    height: 64px;
    padding-left: 50px;
    background: #0f151d;
    color: ${BLUE};
    font-size: 38px;
    line-height: 64px;
`;

const PromoClose = styled.div`
    position: absolute;
    right: 0;
    top: 0;
    width: 42px;
    height: 42px;
    padding: 6px 0 0 12px;
    border-bottom-left-radius: 28px;
    background: #1f2326;
`;

const Danmu = styled.div`
    height: 176px;
    padding: 30px 49px 0;
    display: flex;
    justify-content: space-between;
`;

const DanmuSettings = styled.div`
    width: 98px;
    height: 98px;
    border: 1px solid #282828;
    border-radius: 50%;
    background: #1c1c1c;
    padding: 23px 0 0 20px;
`;

const DanmuInput = styled.div`
    width: 965px;
    height: 98px;
    border: 2px solid #242424;
    border-radius: 49px;
    background: #1c1c1c;
    overflow: hidden;
    display: flex;
`;

const DanmuHint = styled.div`
    flex: 1;
    padding-left: 37px;
    font-size: 46px;
    line-height: 96px;
    color: ${DIM};
`;

const DanmuToggle = styled.div`
    position: relative;
    width: 115px;
    padding-left: 28px;
    border-left: 1px solid #2a2a2a;
    background: #0d0d0d;
    color: ${BLUE};
    font-size: 46px;
    font-weight: 900;
    line-height: 94px;
`;

const DanmuCheck = styled.svg`
    position: absolute;
    left: 60px;
    top: 51px;
`;

const Banner = styled.div`
    height: 98px;
    margin: 0 20px;
    padding: 0 41px 0 33px;
    border-radius: 49px;
    background: #111921;
    display: flex;
    align-items: center;
    color: ${BLUE};
`;

const Marquee = styled.div`
    width: 961px;
    margin-left: 14px;
    display: flex;
    justify-content: space-between;
    overflow: hidden;
    font-size: 42px;
    line-height: 60px;
    mask-image: linear-gradient(90deg, transparent 0, #000 32px, #000 914px, transparent 956px);
`;

const BannerRule = styled.i`
    width: 1px;
    height: 40px;
    margin: 0 18px 0 7px;
    background: ${BLUE};
`;

const Sections = styled.div`
    height: 114px;
    margin-top: 19px;
    padding-left: 33px;
    display: flex;
    background: #1c1c1c;
    border-top: 1px solid #333;
    border-bottom: 1px solid #333;
`;

const Section = styled.div`
    position: relative;
    width: 162px;
    font-size: 47px;
    line-height: 116px;
    text-align: center;
    color: ${GREY};
    ${(p) => p.$active && underline}
`;

const BottomBar = styled.div`
    height: 148px;
    display: flex;
    background: #1c1c1c;
`;

const IndexBox = styled.div`
    width: 297px;
    padding-top: 11px;
    display: flex;
    flex-direction: column;
    align-items: center;
`;

const IndexValue = styled.div`
    margin: 9px 0 0 4px;
    font-size: 45px;
    line-height: 50px;
    letter-spacing: -1.1px;
    color: ${RED};
`;

const IndexLine = styled.div`
    width: 100%;
    margin-top: 5px;
    padding: 0 11px 0 43px;
    display: flex;
    align-items: center;
    justify-content: space-between;
    font-size: 39px;
    line-height: 50px;
    color: ${GREY};

    ${Num} {
        margin-top: -2px;
    }
`;

const Action = styled.div`
    width: 225.6px;
    padding-top: 11px;
    display: flex;
    flex-direction: column;
    align-items: center;
    gap: 21px;
    font-size: 38px;
    color: ${GREY};
`;

const SystemNav = styled.div`
    height: 128px;
    padding-top: 36px;
    background: #fcfcfc;

    svg {
        margin-left: 320px;
    }
`;
